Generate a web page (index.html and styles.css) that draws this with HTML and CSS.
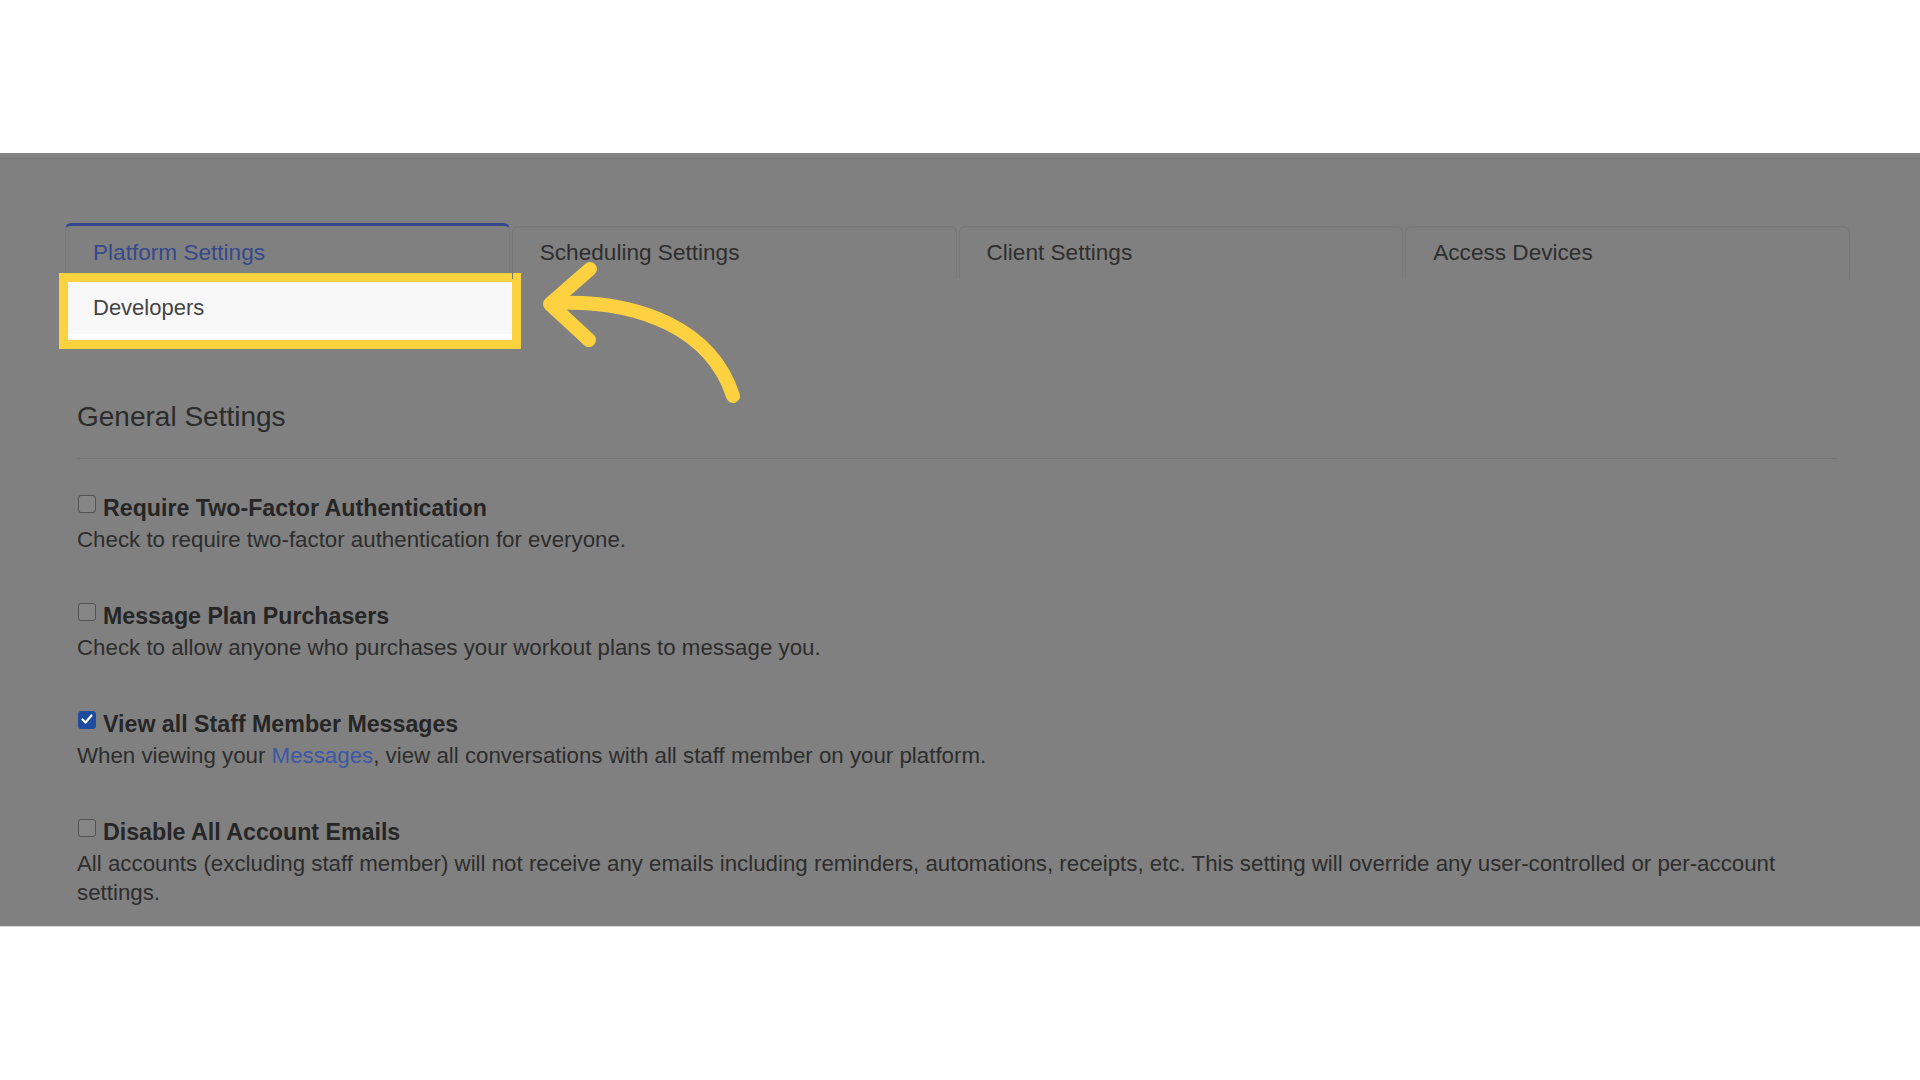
FILE: index.html
```html
<!DOCTYPE html>
<html lang="en">

<head>
  <meta charset="UTF-8">
  <meta name="viewport" content="width=device-width, initial-scale=1.0">
  <title>Platform Settings</title>
  <link rel="stylesheet" href="styles.css">
</head>

<body>
  <div class="frame-top"></div>

  <div class="shot">
    <div class="navbar"></div>

    <ul class="tabs">
      <li class="tab active">
        Platform Settings
        <div class="dropdown">Developers</div>
      </li>
      <li class="tab">Scheduling Settings</li>
      <li class="tab">Client Settings</li>
      <li class="tab">Access Devices</li>
    </ul>

    <main class="settings">
      <h3>General Settings</h3>

      <ul class="options">
        <li>
          <label><span class="check"></span>Require Two-Factor Authentication</label>
          <p>Check to require two-factor authentication for everyone.</p>
        </li>
        <li>
          <label><span class="check"></span>Message Plan Purchasers</label>
          <p>Check to allow anyone who purchases your workout plans to message you.</p>
        </li>
        <li>
          <label>
            <span class="check checked">
              <svg viewBox="0 0 18 18" width="18" height="18"><path d="M4.5 9.5l3 3 6-7" fill="none" stroke="#fff" stroke-width="2.2" stroke-linecap="round" stroke-linejoin="round"/></svg>
            </span>View all Staff Member Messages
          </label>
          <p>When viewing your <a href="#">Messages</a>, view all conversations with all staff member on your platform.</p>
        </li>
        <li>
          <label><span class="check"></span>Disable All Account Emails</label>
          <p>All accounts (excluding staff member) will not receive any emails including reminders, automations, receipts, etc. This setting will override any user-controlled or per-account settings.</p>
        </li>
      </ul>
    </main>
  </div>

  <!-- callout arrow pointing at the highlighted menu item -->
  <svg class="arrow" viewBox="0 0 1920 1080" width="1920" height="1080">
    <g fill="none" stroke="#fdd13f" stroke-width="14" stroke-linecap="round" stroke-linejoin="round">
      <path d="M590 269 L550 304 L589 340"/>
      <path d="M553 303 C640 299 712 330 733 396"/>
    </g>
  </svg>
</body>

</html>
```

FILE: styles.css
```css
* {
  margin: 0;
  padding: 0;
  box-sizing: border-box;
}

body {
  background: #fff;
  font-family: 'Liberation Sans', Arial, sans-serif;
  color: #2c2c2c;
  inline-size: 1920px;
  block-size: 1080px;
  overflow: hidden;
  position: relative;
}

.frame-top {
  block-size: 153px;
}

.shot {
  block-size: 774px;
  background: #808080;
  border-bottom: 1px solid #d8d8d8;
  overflow: hidden;
}

.navbar {
  block-size: 6px;
  background: #838383;
  border-bottom: 1px solid #767676;
}

.tabs {
  list-style: none;
  display: grid;
  grid-template-columns: repeat(4, 1fr);
  align-items: end;
  gap: 2px;
  margin-top: 64px;
  margin-left: 65px;
  inline-size: 1785px;
}

.tab {
  position: relative;
  font-size: 22.6px;
  line-height: 26px;
  color: #2e2e2e;
  padding: 13px 27px 13px;
  border: 1px solid #777;
  border-bottom: 0;
  border-radius: 6px 6px 0 0;
  box-shadow: inset 0 1px 0 #7b7b7b;
}

.tab.active {
  color: #35498c;
  border-top: 3px solid #36488c;
  border-color: #36488c #7a7a7a #7a7a7a;
  padding-top: 14px;
  box-shadow: none;
}

.dropdown {
  position: absolute;
  top: calc(100% + 3px);
  left: 2px;
  inline-size: 444px;
  padding: 13px 25px 13px;
  font-size: 22px;
  background: #f8f8f8;
  border-bottom: 6px solid #fff;
  color: #444;
  outline: 9px solid #fdd23f;
}

.settings {
  padding: 0 83px 0 77px;
}

h3 {
  margin-top: 122px;
  font-size: 28px;
  line-height: 31px;
  font-weight: 400;
  color: #2b2b2b;
  padding-bottom: 26px;
  border-bottom: 1px solid #767676;
}

.options {
  list-style: none;
  margin-top: 34px;
  display: flex;
  flex-direction: column;
  gap: 46.5px;
}

label {
  display: flex;
  align-items: flex-start;
  font-size: 23.2px;
  line-height: 30px;
  font-weight: 700;
  color: #262626;
  margin-bottom: 2px;
}

.check {
  flex: none;
  display: flex;
  inline-size: 18px;
  block-size: 18px;
  margin: 2px 7px 0 1px;
  border: 1.5px solid #525252;
  border-radius: 3px;
  background: #858585;
}

.check.checked {
  background: #1d4b9d;
  border-color: #1d4b9d;
}

.check svg {
  margin: -1.5px;
}

p {
  font-size: 22.3px;
  line-height: 29.4px;
  color: #2d2d2d;
}

a {
  color: #3c57a5;
  text-decoration: none;
}

.arrow {
  position: absolute;
  inset: 0;
  pointer-events: none;
}
```
